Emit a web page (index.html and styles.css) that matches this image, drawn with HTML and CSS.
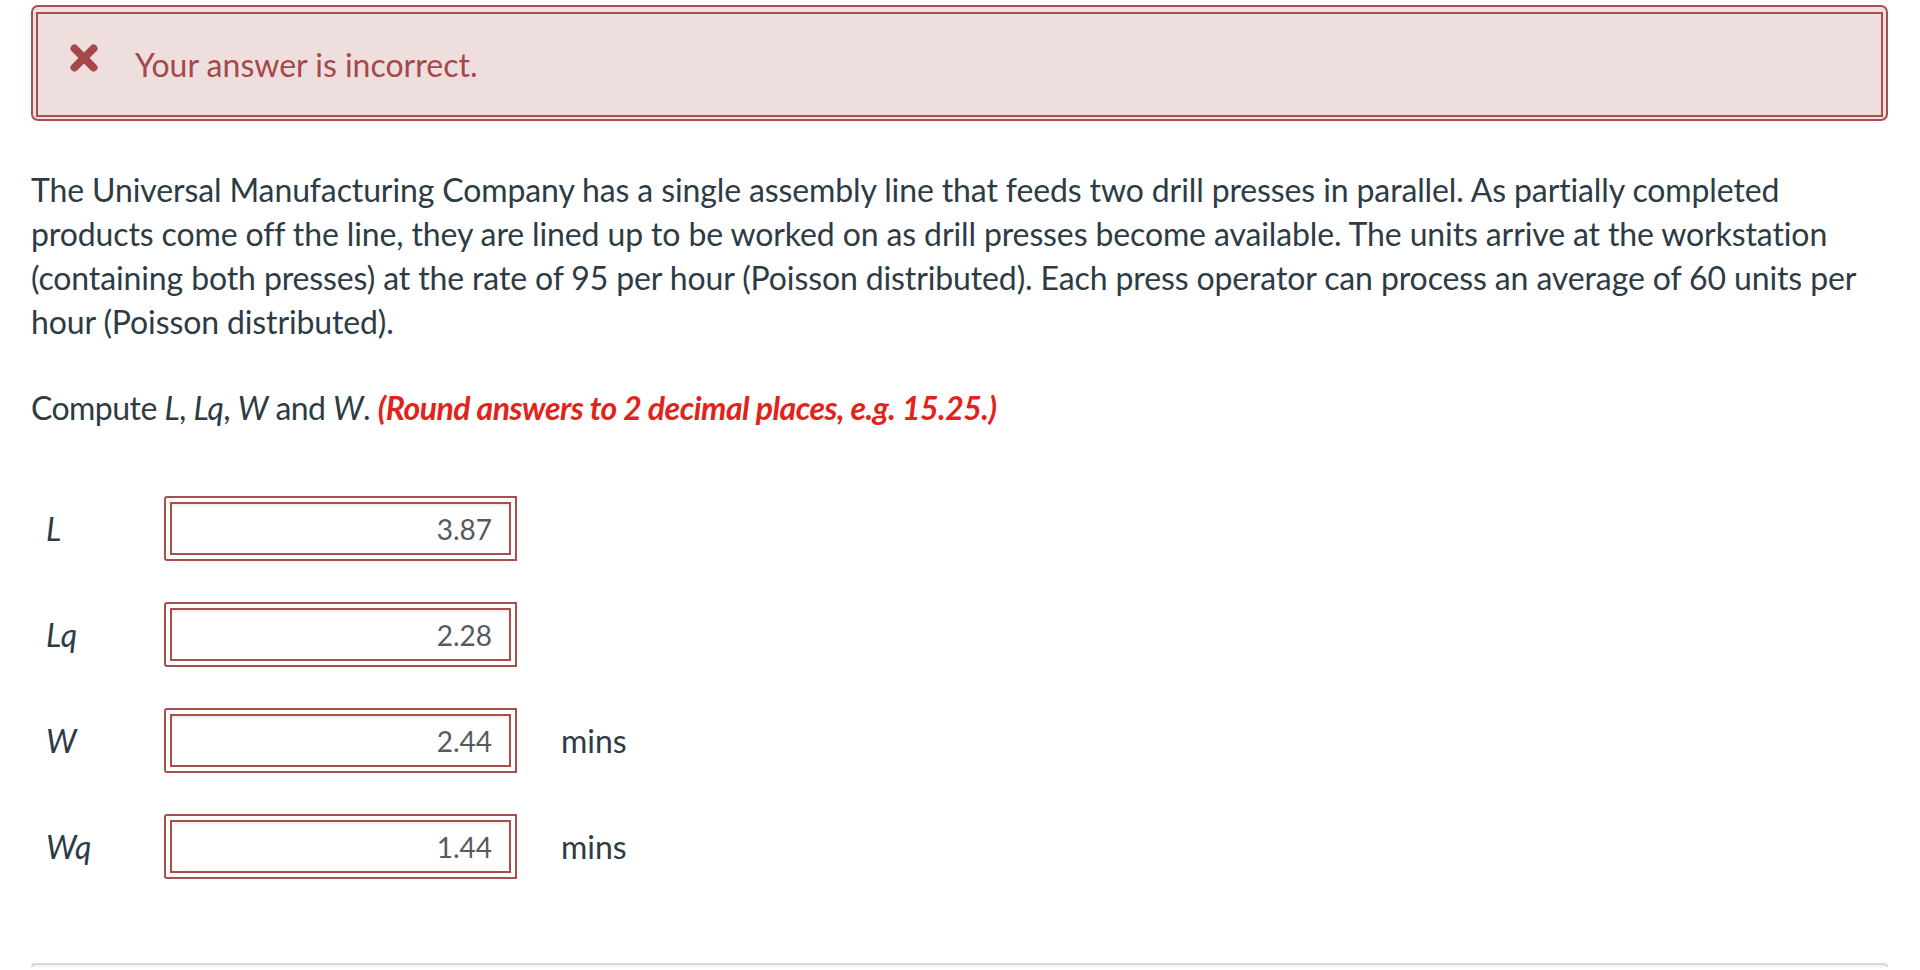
FILE: index.html
```html
<!DOCTYPE html>
<html lang="en">
<head>
<meta charset="utf-8">
<title>Question</title>
<link rel="stylesheet" href="styles.css">
</head>
<body>
<div class="page">
  <div class="alert">
    <div class="alert-inner">
      <svg class="alert-icon" viewBox="0 0 28 28" width="28" height="28" aria-hidden="true">
        <path d="M4.5 4.5 L23.5 23.5 M23.5 4.5 L4.5 23.5" stroke="#a5484a" stroke-width="8" stroke-linecap="round" fill="none"/>
      </svg>
      <span class="alert-text">Your answer is incorrect.</span>
    </div>
  </div>

  <p class="question">The Universal Manufacturing Company has a single assembly line that feeds two drill presses in parallel. As partially completed products come off the line, they are lined up to be worked on as drill presses become available. The units arrive at the workstation (containing both presses) at the rate of 95 per hour (Poisson distributed). Each press operator can process an average of 60 units per hour (Poisson distributed).</p>

  <p class="compute">Compute <i>L</i>, <i>Lq</i>, <i>W</i> and <i>W</i>. <b class="hint">(Round answers to 2 decimal places, e.g. 15.25.)</b></p>

  <div class="answers">
    <div class="row">
      <span class="label"><i>L</i></span>
      <div class="field"><div class="value">3.87</div></div>
      <span class="unit"></span>
    </div>
    <div class="row">
      <span class="label"><i>Lq</i></span>
      <div class="field"><div class="value">2.28</div></div>
      <span class="unit"></span>
    </div>
    <div class="row">
      <span class="label"><i>W</i></span>
      <div class="field"><div class="value">2.44</div></div>
      <span class="unit">mins</span>
    </div>
    <div class="row">
      <span class="label"><i>Wq</i></span>
      <div class="field"><div class="value">1.44</div></div>
      <span class="unit">mins</span>
    </div>
  </div>

  <div class="footer-box"></div>
</div>
</body>
</html>
```

FILE: styles.css
```css
html, body {
  margin: 0;
  padding: 0;
  background: #ffffff;
}

body {
  font-family: Lato, "Open Sans", "Liberation Sans", sans-serif;
  color: #2d3b45;
  font-size: 32px;
  line-height: 44px;
  overflow: hidden;
  height: 970px;
}

.page {
  padding: 5px 32px 0 31px;
}

.alert {
  border: 2px solid #a5504c;
  border-radius: 7px;
  background: #efdfdf;
  padding: 5px 3px 2px 3px;
}

.alert-inner {
  border: 2px solid #a5504c;
  background: #efdede;
  height: 101px;
  display: flex;
  align-items: center;
  padding-left: 32px;
}

.alert-icon {
  flex: none;
  margin-top: -14px;
}

.alert-text {
  color: #a5484a;
  margin-left: 37px;
}

.question {
  margin: 47px 0 0 0;
  letter-spacing: -0.12px;
}

.compute {
  margin: 42px 0 0 0;
  letter-spacing: -0.55px;
}

.compute i {
  font-style: italic;
}

.hint {
  color: #e2231a;
  font-style: italic;
  font-weight: 700;
  letter-spacing: -0.5px;
}

.answers {
  margin-top: 66px;
  display: flex;
  flex-direction: column;
  gap: 41px;
}

.row {
  display: grid;
  grid-template-columns: 133px 353px auto;
  align-items: center;
}

.label {
  padding-left: 15px;
  font-style: italic;
}

.field {
  border: 2px solid #a5504c;
  border-radius: 3px 0 0 3px;
  padding: 4px;
  height: 65px;
  box-sizing: border-box;
}

.value {
  border: 2px solid #a5504c;
  height: 100%;
  box-sizing: border-box;
  box-shadow: inset 0 2px 3px rgba(0, 0, 0, 0.08);
  text-align: right;
  padding-right: 17px;
  color: #555a5e;
  font-size: 28px;
  line-height: 50px;
}

.unit {
  padding-left: 44px;
}

.footer-box {
  margin-top: 84px;
  height: 2px;
  border: 2px solid #d8d8d8;
  border-bottom: none;
  border-radius: 7px 7px 0 0;
  background: #f4f4f4;
}
```
